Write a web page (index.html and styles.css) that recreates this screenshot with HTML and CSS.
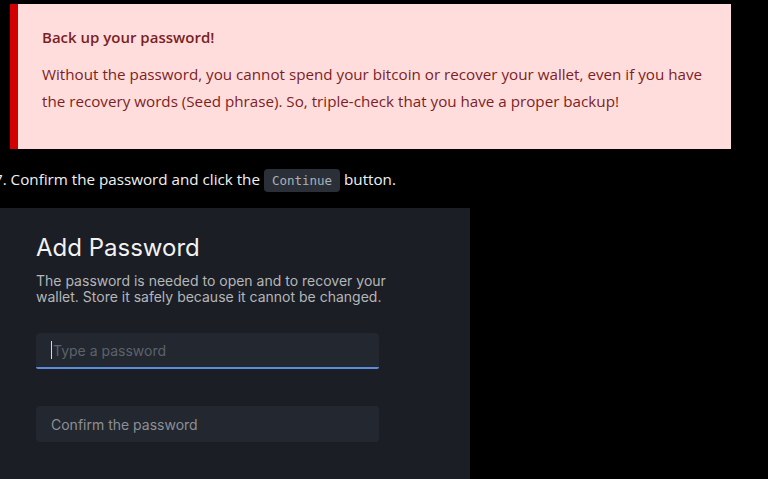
FILE: index.html
```html
<!DOCTYPE html>
<html lang="en">
<head>
  <meta charset="UTF-8" />
  <meta name="viewport" content="width=device-width, initial-scale=1.0"/>
  <title>Add Password - Wallet Guide</title>
  <link rel="stylesheet" href="styles.css">
</head>
<body>
  <div class="alert">
    <p class="alert-title">Back up your password!</p>
    <p class="alert-text">Without the password, you cannot spend your bitcoin or recover your wallet, even if you have the recovery words (Seed phrase). So, triple-check that you have a proper backup!</p>
  </div>

  <p class="step">7. Confirm the password and click the <code>Continue</code> button.</p>

  <div class="shot">
    <h2>Add Password</h2>
    <p class="shot-desc">The password is needed to open and to recover your wallet. Store it safely because it cannot be changed.</p>
    <div class="field focused"><span class="caret"></span>Type a password</div>
    <div class="field">Confirm the password</div>
  </div>
</body>
</html>
```

FILE: styles.css
```css
body {
  margin: 0;
  padding: 0;
  background: #000;
  color: #e3e3e3;
  font-family: 'Open Sans', 'Noto Sans', sans-serif;
  overflow: hidden;
}

.alert {
  margin: 4px 37px 0 10px;
  padding: 23px 24px 34px;
  background-color: #ffdddd;
  border-left: 8px solid #d40000;
  color: #7b1f24;
  font-size: 15.2px;
}

.alert-title {
  margin: 0 0 14px;
  font-weight: 600;
  font-size: 15px;
}

.alert-text {
  margin: 0;
  line-height: 27px;
}

.step {
  margin: 20px 0 0 -6px;
  font-size: 15.2px;
  color: #f0f0f0;
}

code {
  font-family: 'DejaVu Sans Mono', monospace;
  font-size: 12.5px;
  color: #a9b1ba;
  background-color: #2b3038;
  padding: 4px 8px;
  border-radius: 4px;
}

.shot {
  width: 434px;
  height: 280px;
  margin-top: 19px;
  padding: 25px 0 0 36px;
  background-color: #1b1e24;
  font-family: Inter, Roboto, sans-serif;
}

.shot h2 {
  margin: 0 0 11px;
  font-size: 24px;
  font-weight: 400;
  color: #f2f2f2;
}

.shot-desc {
  margin: 0 0 28px;
  width: 360px;
  font-size: 14px;
  line-height: 16px;
  color: #b4b6ba;
}

.field {
  display: flex;
  align-items: center;
  width: 328px;
  height: 36px;
  padding-left: 15px;
  margin-bottom: 37px;
  background-color: #222730;
  border-radius: 4px;
  font-size: 14px;
  color: #8c9096;
}

.field.focused {
  height: 34px;
  border-bottom: 2px solid #5b8ddb;
  border-radius: 4px 4px 2px 2px;
  color: #5d626a;
}

.caret {
  width: 1px;
  height: 18px;
  margin-right: 1px;
  background-color: #d8d8d8;
}
```
